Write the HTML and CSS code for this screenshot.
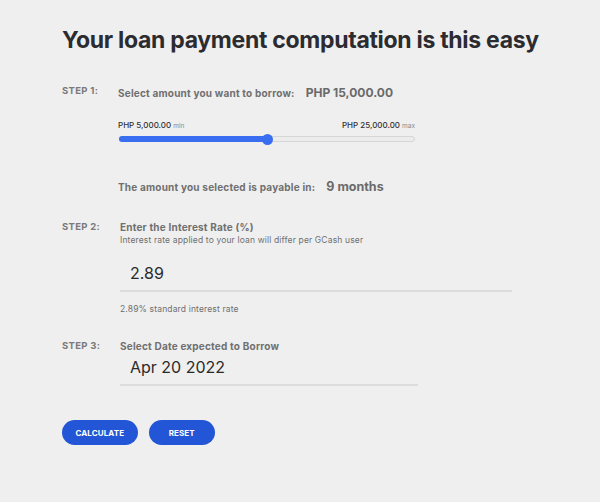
FILE: index.html
```html
<!DOCTYPE html>
<html>
<head>
<meta charset="utf-8">
<link rel="stylesheet" href="styles.css">
</head>
<body>
<main class="page">
  <h1 class="title">Your loan payment computation is this easy</h1>

  <section class="step step-1">
    <div class="step-label">STEP 1:</div>
    <div class="step-body">
      <div class="amount-row">
        <span class="q">Select amount you want to borrow:</span>
        <span class="amount">PHP 15,000.00</span>
      </div>
      <div class="range-labels">
        <span>PHP 5,000.00 <small>min</small></span>
        <span>PHP 25,000.00 <small>max</small></span>
      </div>
      <div class="slider">
        <div class="slider-fill" style="width: 50%"></div>
        <div class="slider-thumb" style="left: 50%"></div>
      </div>
      <div class="payable-row">
        <span class="q">The amount you selected is payable in:</span>
        <span class="months">9 months</span>
      </div>
    </div>
  </section>

  <section class="step step-2">
    <div class="step-label">STEP 2:</div>
    <div class="step-body">
      <div class="q">Enter the Interest Rate (%)</div>
      <div class="hint">Interest rate applied to your loan will differ per GCash user</div>
      <div class="field field-rate">2.89</div>
      <div class="hint note">2.89% standard interest rate</div>
    </div>
  </section>

  <section class="step step-3">
    <div class="step-label">STEP 3:</div>
    <div class="step-body">
      <div class="q">Select Date expected to Borrow</div>
      <div class="field field-date">Apr 20 2022</div>
    </div>
  </section>

  <div class="actions">
    <button class="btn">CALCULATE</button>
    <button class="btn btn-reset">RESET</button>
  </div>
</main>
</body>
</html>
```
FILE: styles.css
```css
html, body {
  margin: 0;
  padding: 0;
  background: #efefef;
}
body {
  font-family: Inter, "Noto Sans", sans-serif;
  color: #6e6e6e;
}
.page {
  padding: 24px 0 0 62px;
  width: 560px;
  box-sizing: border-box;
}
.title {
  margin: 0 0 28px 0;
  font-family: Inter, "Open Sans", sans-serif;
  font-weight: 700;
  font-size: 23px;
  line-height: 32px;
  color: #2b2b30;
  white-space: nowrap;
  letter-spacing: -0.3px;
}
.step {
  display: flex;
}
.step-label {
  width: 56px;
  flex: none;
  font-size: 9.5px;
  font-weight: 700;
  color: #7a7a7a;
  letter-spacing: 0.3px;
  line-height: 14px;
}
.step-body {
  flex: 1;
}
.q {
  font-size: 10px;
  font-weight: 700;
  color: #707070;
  letter-spacing: 0.2px;
  line-height: 14px;
}
.amount-row, .payable-row {
  display: flex;
  align-items: center;
}
.amount-row {
  margin-top: 1px;
}
.amount {
  margin-left: 11px;
  font-size: 12px;
  font-weight: 700;
  color: #6a6a6a;
}
.range-labels {
  display: flex;
  justify-content: space-between;
  width: 297px;
  margin-top: 19px;
  font-size: 8px;
  font-weight: 500;
  color: #333333;
  line-height: 12px;
}
.range-labels small {
  font-size: 6.5px;
  color: #8a8a8a;
  font-weight: 400;
}
.slider {
  position: relative;
  width: 294px;
  height: 4px;
  margin: 4px 0 0 1px;
  border: 1px solid #d6d6d6;
  border-radius: 3px;
  background: #ececec;
}
.slider-fill {
  position: absolute;
  left: -1px;
  top: -1px;
  bottom: -1px;
  background: #3a6ef0;
  border-radius: 3px;
}
.slider-thumb {
  position: absolute;
  top: 50%;
  width: 11px;
  height: 11px;
  margin: -5.5px 0 0 -5.5px;
  border-radius: 50%;
  background: #3a6ef0;
}
.payable-row {
  margin-top: 37px;
}
.months {
  margin-left: 11px;
  font-size: 12.5px;
  font-weight: 700;
  color: #6a6a6a;
}
.step-2 {
  margin-top: 26px;
}
.step-2 .step-body, .step-3 .step-body {
  padding-left: 2px;
}
.hint {
  font-size: 8.5px;
  color: #707070;
  line-height: 12px;
  letter-spacing: 0.15px;
}
.field {
  font-size: 16px;
  color: #2a2a2a;
  padding: 0 0 0 10px;
  border-bottom: 2px solid #dcdcdc;
}
.field-rate {
  width: 382px;
  margin-top: 15px;
  line-height: 24px;
  padding-bottom: 5px;
}
.note {
  margin-top: 11px;
}
.step-3 {
  margin-top: 24px;
}
.field-date {
  width: 288px;
  margin-top: 2px;
  line-height: 24px;
  padding-bottom: 5px;
}
.actions {
  display: flex;
  gap: 11px;
  margin-top: 34px;
}
.btn {
  height: 25px;
  padding: 0 13.5px;
  border: none;
  border-radius: 13px;
  background: #2356d6;
  color: #fff;
  font-family: Inter, sans-serif;
  font-weight: 700;
  font-size: 8px;
  letter-spacing: 0.1px;
}
.btn-reset {
  padding: 0 20px;
}
```
